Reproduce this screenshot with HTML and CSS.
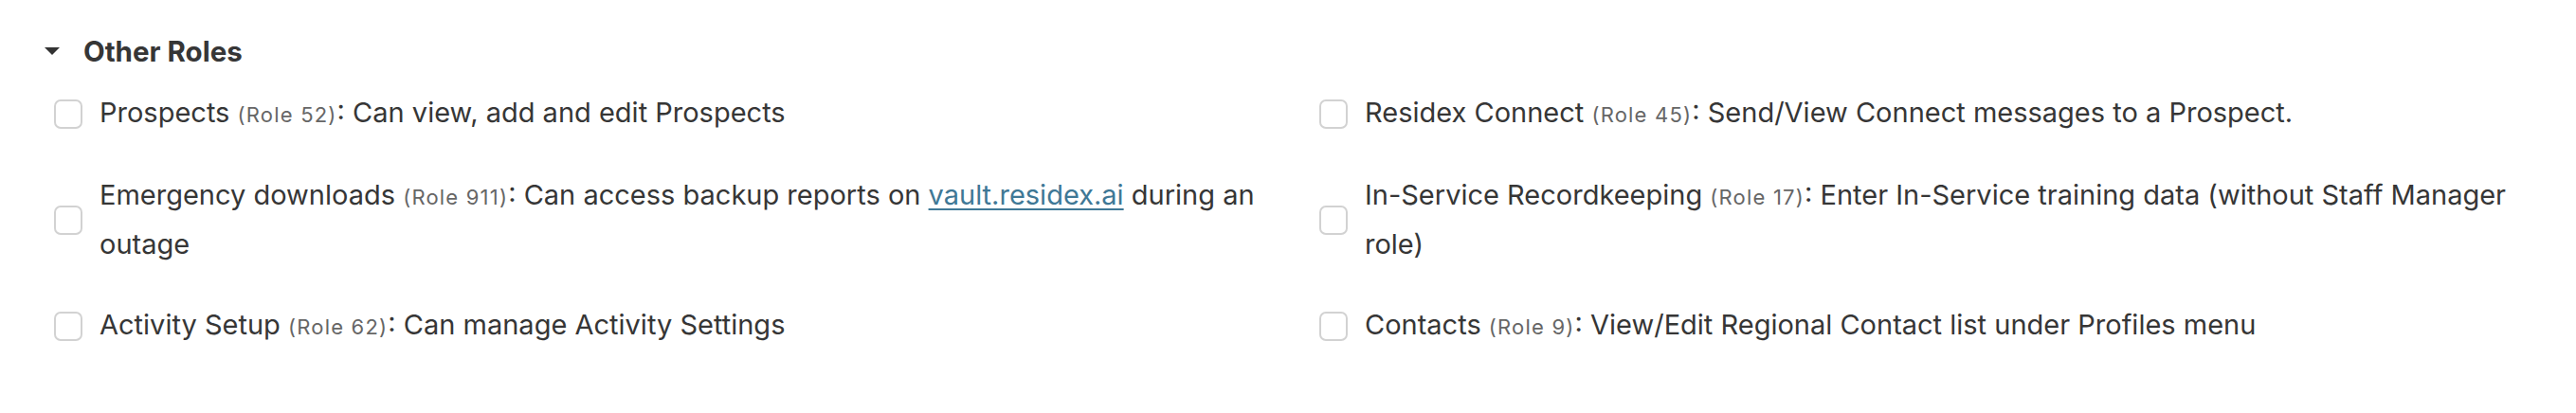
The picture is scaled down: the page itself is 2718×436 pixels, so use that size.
FILE: index.html
```html
<!DOCTYPE html>
<html lang="en">
<head>
<meta charset="utf-8">
<title>Other Roles</title>
<link rel="stylesheet" href="styles.css">
</head>
<body>
<section class="roles">
  <div class="roles-header">
    <span class="caret"></span>
    <h2 class="roles-title">Other Roles</h2>
  </div>
  <div class="roles-grid">
    <label class="role">
      <input type="checkbox" class="role-check">
      <span class="role-text">Prospects <span class="role-id">(Role 52)</span>: Can view, add and edit Prospects</span>
    </label>
    <label class="role">
      <input type="checkbox" class="role-check">
      <span class="role-text">Residex Connect <span class="role-id">(Role 45)</span>: Send/View Connect messages to a Prospect.</span>
    </label>
    <label class="role">
      <input type="checkbox" class="role-check">
      <span class="role-text">Emergency downloads <span class="role-id">(Role 911)</span>: Can access backup reports on <a class="role-link" href="#">vault.residex.ai</a> during an outage</span>
    </label>
    <label class="role">
      <input type="checkbox" class="role-check">
      <span class="role-text">In-Service Recordkeeping <span class="role-id">(Role 17)</span>: Enter In-Service training data (without Staff Manager role)</span>
    </label>
    <label class="role">
      <input type="checkbox" class="role-check">
      <span class="role-text">Activity Setup <span class="role-id">(Role 62)</span>: Can manage Activity Settings</span>
    </label>
    <label class="role">
      <input type="checkbox" class="role-check">
      <span class="role-text">Contacts <span class="role-id">(Role 9)</span>: View/Edit Regional Contact list under Profiles menu</span>
    </label>
  </div>
</section>
</body>
</html>
```
FILE: styles.css
```css
html, body {
  margin: 0;
  padding: 0;
  background: #ffffff;
}

body {
  font-family: Inter, "Noto Sans", "Liberation Sans", sans-serif;
  color: #363636;
}

.roles {
  padding: 36px 40px 0 40px;
}

.roles-header {
  display: flex;
  align-items: center;
  gap: 25px;
  padding-left: 7px;
}

.caret {
  width: 0;
  height: 0;
  border-left: 8px solid transparent;
  border-right: 8px solid transparent;
  border-top: 8px solid #333333;
}

.roles-title {
  margin: 0;
  font-size: 29.5px;
  font-weight: 700;
  line-height: 36px;
  color: #363636;
}

.roles-grid {
  display: grid;
  grid-template-columns: 1fr 1fr;
  column-gap: 32px;
  row-gap: 35px;
  margin-top: 22px;
}

.role {
  display: flex;
  align-items: center;
  gap: 18px;
  padding-left: 17px;
  font-size: 29px;
  line-height: 50px;
  cursor: pointer;
}

.role-check {
  appearance: none;
  -webkit-appearance: none;
  flex: none;
  width: 30px;
  height: 31px;
  margin: 0;
  border: 2px solid #d2d2d2;
  border-radius: 7px;
  background: #ffffff;
}

.role-text {
  flex: 1;
}

.role-id {
  font-size: 22px;
  letter-spacing: 1.2px;
  color: #666666;
}

.role-link {
  color: #3f7896;
  text-decoration: underline;
  text-decoration-thickness: 2px;
  text-underline-offset: 4px;
}
```
